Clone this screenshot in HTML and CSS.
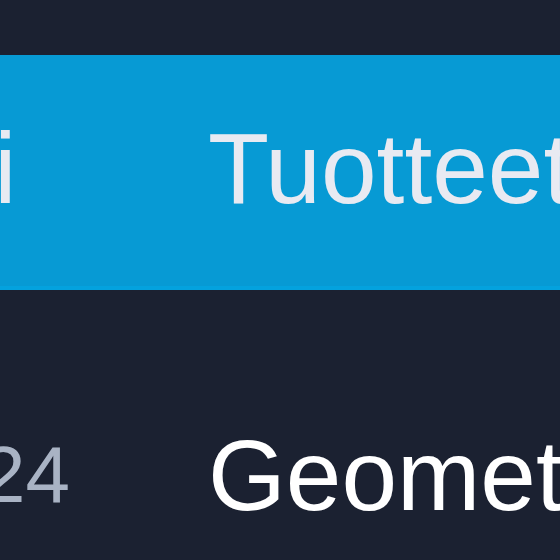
FILE: index.html
```html
<!DOCTYPE html>
<html lang="fi">
<head>
  <meta charset="UTF-8" />
  <meta name="viewport" content="width=device-width, initial-scale=1.0"/>
  <title>Tuotteet</title>
  <link rel="stylesheet" href="styles.css">
</head>
<body>
	<div class="table">
		<div class="row head-row">
			<div class="cell year-cell">Vuosi</div>
			<div class="cell">Tuotteet</div>
		</div>
		<div class="row body-row">
			<div class="cell year-cell num">2024</div>
			<div class="cell name">Geometria</div>
		</div>
	</div>
</body>
</html>
```

FILE: styles.css
```css
html, body {
  margin: 0;
  height: 100%;
  overflow: hidden;
}

body {
  background: #1b2131;
  font-family: "Liberation Sans", Arial, sans-serif;
  padding-top: 55px;
  box-sizing: border-box;
}

.table {
  margin-left: -230px;
  width: 1100px;
}

.row {
  display: grid;
  grid-template-columns: 438px 1fr;
  align-items: center;
}

.cell {
  font-size: 100px;
  line-height: 100px;
  white-space: nowrap;
}

.head-row {
  background: #079ad4;
  color: #e8eaf2;
  padding: 63px 0 68px;
  border-bottom: 4px solid #04a2de;
}

.body-row {
  padding-top: 135px;
  color: #ffffff;
}

.year-cell {
  padding-right: 138px;
}

.num {
  font-size: 80px;
  line-height: 80px;
  text-align: right;
  color: #a9b3c4;
}
```
